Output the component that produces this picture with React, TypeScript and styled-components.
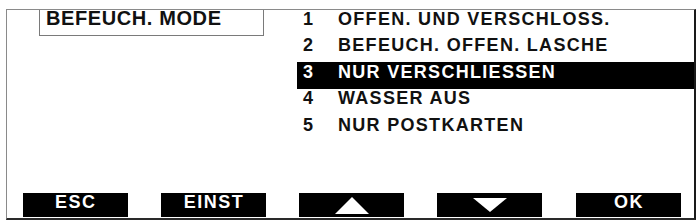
import React from 'react';
import styled, { createGlobalStyle } from 'styled-components';

const options = [
	{ id: 1, label: 'OFFEN. UND VERSCHLOSS.' },
	{ id: 2, label: 'BEFEUCH. OFFEN. LASCHE' },
	{ id: 3, label: 'NUR VERSCHLIESSEN' },
	{ id: 4, label: 'WASSER AUS' },
	{ id: 5, label: 'NUR POSTKARTEN' },
];

const selected = 3;

const GlobalStyle = createGlobalStyle`
	html, body {
		margin: 0;
		padding: 0;
		background: #fff;
	}
	body {
		font-family: 'Liberation Sans', Arial, sans-serif;
		color: #111;
	}
`;

const App = () => {
	return (
		<>
			<GlobalStyle />
			<Page>
				<Frame>
					<Content>
						<TitleBox>
							<Title>BEFEUCH. MODE</Title>
						</TitleBox>
						<List>
							{options.map((option) => (
								<Row key={option.id} $active={option.id === selected}>
									<Num>{option.id}</Num>
									<Label>{option.label}</Label>
								</Row>
							))}
						</List>
					</Content>
					<ButtonBar>
						<SoftKey>
							<KeyText>ESC</KeyText>
						</SoftKey>
						<SoftKey>
							<KeyText>EINST</KeyText>
						</SoftKey>
						<SoftKey>
							<Arrow width="34" height="17" viewBox="0 0 34 17" $top={4}>
								<polygon points="17,0 34,17 0,17" fill="#fff" />
							</Arrow>
						</SoftKey>
						<SoftKey>
							<Arrow width="34" height="14" viewBox="0 0 34 14" $top={5}>
								<polygon points="0,0 34,0 17,14" fill="#fff" />
							</Arrow>
						</SoftKey>
						<SoftKey>
							<KeyText>OK</KeyText>
						</SoftKey>
					</ButtonBar>
				</Frame>
			</Page>
		</>
	);
};

const Page = styled.div`
	width: 700px;
	height: 223px;
	padding: 9px 0 0 6px;
	box-sizing: border-box;
	overflow: hidden;
`;

const Frame = styled.div`
	display: flex;
	flex-direction: column;
	width: 690px;
	height: 211px;
	box-sizing: border-box;
	border-top: 1px solid #8a8a8a;
	border-left: 1px solid #8a8a8a;
	border-right: 2px solid #1a1a1a;
	border-bottom: 2px solid #2a2a2a;
`;

const Content = styled.div`
	display: flex;
	align-items: flex-start;
	flex: 1;
`;

const TitleBox = styled.div`
	margin-left: 32px;
	width: 225px;
	height: 26px;
	box-sizing: border-box;
	border-left: 1px solid #7a7a7a;
	border-right: 1px solid #7a7a7a;
	border-bottom: 1px solid #7a7a7a;
	padding-left: 6px;
`;

const Title = styled.div`
	font-size: 20px;
	line-height: 16px;
	font-weight: 700;
	letter-spacing: 0.6px;
	color: #111;
	white-space: nowrap;
`;

const List = styled.div`
	display: flex;
	flex-direction: column;
	flex: 1;
	margin-left: 33px;
	margin-top: -1px;
`;

const Row = styled.div<{ $active?: boolean }>`
	display: flex;
	align-items: flex-start;
	height: 26.5px;
	padding-left: 6px;
	font-size: 18px;
	line-height: 17px;
	font-weight: 700;
	padding-top: 1.5px;
	box-sizing: border-box;
	background: ${(p) => (p.$active ? '#000' : 'transparent')};
	color: ${(p) => (p.$active ? '#fff' : '#111')};
	white-space: nowrap;
`;

const Num = styled.span`
	width: 35px;
	flex-shrink: 0;
`;

const Label = styled.span`
	letter-spacing: 1.3px;
`;

const ButtonBar = styled.div`
	display: flex;
	gap: 33.3px;
	padding-left: 15.5px;
	margin-bottom: 1px;
`;

const SoftKey = styled.div`
	position: relative;
	display: flex;
	justify-content: center;
	align-items: flex-start;
	width: 105px;
	height: 24px;
	background: #000;
	overflow: hidden;
`;

const KeyText = styled.span`
	margin-top: 0.5px;
	color: #fff;
	font-size: 18px;
	line-height: 17px;
	font-weight: 700;
	letter-spacing: 1.5px;
	padding-left: 1.5px;
`;

const Arrow = styled.svg<{ $top: number }>`
	display: block;
	margin-top: ${(p) => p.$top}px;
`;

export default App;
